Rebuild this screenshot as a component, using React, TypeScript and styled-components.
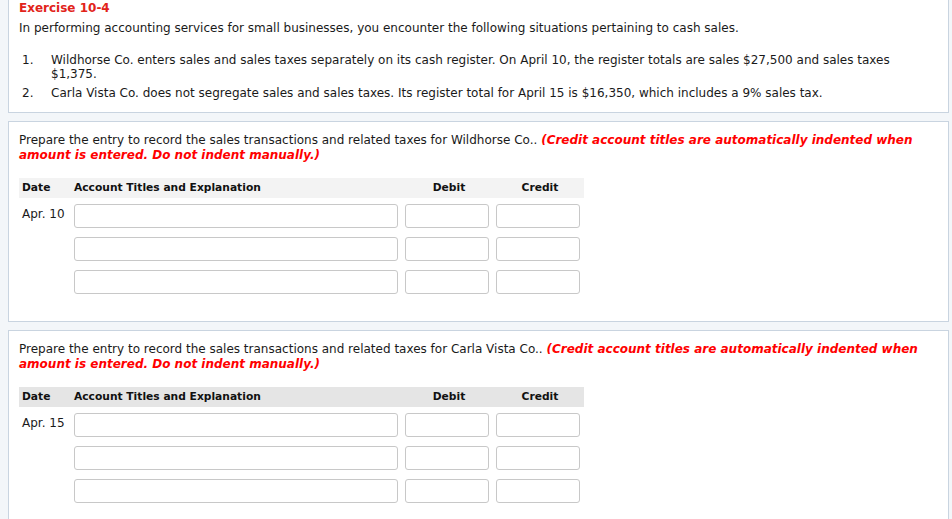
import React from "react";
import styled, { createGlobalStyle } from "styled-components";

const Global = createGlobalStyle`
  html, body { margin: 0; padding: 0; background: #f3f6f9; }
  body { font-family: Verdana, "DejaVu Sans", sans-serif; color: #1a1a1a; }
  * { box-sizing: border-box; }
`;

const Page = styled.div`
  padding: 0 3px 20px 8px;
  display: flex;
  flex-direction: column;
  gap: 8px;
`;

const Panel = styled.section<{ $top?: boolean }>`
  background: #fff;
  border: 1px solid #c9d4e0;
  margin-top: ${(p) => (p.$top ? "-1px" : "0")};
  padding: ${(p) => (p.$top ? "1px 10px 12px 10px" : "11px 10px 27px 10px")};
  font-size: 12px;
  line-height: 15px;
`;

const Heading = styled.h2`
  margin: 0;
  font-size: 12px;
  line-height: 15px;
  font-weight: bold;
  color: #e2231a;
`;

const Para = styled.p`
  margin: 5px 0 0;
`;

const List = styled.ol`
  list-style: none;
  margin: 17px 0 0;
  padding: 0 0 0 3px;
  display: flex;
  flex-direction: column;
  gap: 5px;
`;

const Item = styled.li`
  display: grid;
  grid-template-columns: 29px 1fr;
  line-height: 14px;
  padding-right: 30px;
`;

const Prompt = styled.div`
  padding-right: 8px;
`;

const Note = styled.span`
  color: #ff0000;
  font-weight: bold;
  font-style: italic;
`;

const Table = styled.div`
  margin-top: 15px;
  width: 565px;
  display: grid;
  grid-template-columns: 52px 331px 91px 91px;
`;

const HeadCell = styled.div<{ $bg: string; $center?: boolean }>`
  background: ${(p) => p.$bg};
  height: 20px;
  line-height: 20px;
  font-size: 10.7px;
  font-weight: bold;
  color: #111;
  padding-left: 3px;
  text-align: ${(p) => (p.$center ? "center" : "left")};
  margin-bottom: 6px;
`;

const DateCell = styled.div`
  padding: 3px 0 0 3px;
  font-size: 12px;
  line-height: 15px;
`;

const Cell = styled.div<{ $last?: boolean }>`
  padding-left: 3px;
  margin-bottom: ${(p) => (p.$last ? "0" : "9px")};
`;

const Input = styled.input<{ $w: number }>`
  display: block;
  width: ${(p) => p.$w}px;
  height: 24px;
  border: 1px solid #c8c8c8;
  border-radius: 3px;
  background: #fff;
  padding: 0 4px;
  font: inherit;
`;

const Entry: React.FC<{ company: string; date: string; headBg: string }> = ({
  company,
  date,
  headBg,
}) => {
  const rows = [0, 1, 2];
  return (
    <Panel>
      <Prompt>
        Prepare the entry to record the sales transactions and related taxes for {company}.{" "}
        <Note>(Credit account titles are automatically indented when amount is entered. Do not indent manually.)</Note>
      </Prompt>
      <Table>
        <HeadCell $bg={headBg}>Date</HeadCell>
        <HeadCell $bg={headBg}>Account Titles and Explanation</HeadCell>
        <HeadCell $bg={headBg} $center>Debit</HeadCell>
        <HeadCell $bg={headBg} $center>Credit</HeadCell>
        {rows.map((r) => (
          <React.Fragment key={r}>
            <DateCell>{r === 0 ? date : ""}</DateCell>
            <Cell $last={r === 2}>
              <Input $w={324} />
            </Cell>
            <Cell $last={r === 2}>
              <Input $w={84} />
            </Cell>
            <Cell $last={r === 2}>
              <Input $w={84} />
            </Cell>
          </React.Fragment>
        ))}
      </Table>
    </Panel>
  );
};

export default function App() {
  return (
    <>
      <Global />
      <Page>
        <Panel $top>
          <Heading>Exercise 10-4</Heading>
          <Para>
            In performing accounting services for small businesses, you encounter the following situations pertaining to cash sales.
          </Para>
          <List>
            <Item>
              <span>1.</span>
              <span>
                Wildhorse Co. enters sales and sales taxes separately on its cash register. On April 10, the register totals are sales $27,500 and sales taxes $1,375.
              </span>
            </Item>
            <Item>
              <span>2.</span>
              <span>
                Carla Vista Co. does not segregate sales and sales taxes. Its register total for April 15 is $16,350, which includes a 9% sales tax.
              </span>
            </Item>
          </List>
        </Panel>
        <Entry company="Wildhorse Co." date="Apr. 10" headBg="#f3f3f3" />
        <Entry company="Carla Vista Co." date="Apr. 15" headBg="#e5e5e5" />
      </Page>
    </>
  );
}
